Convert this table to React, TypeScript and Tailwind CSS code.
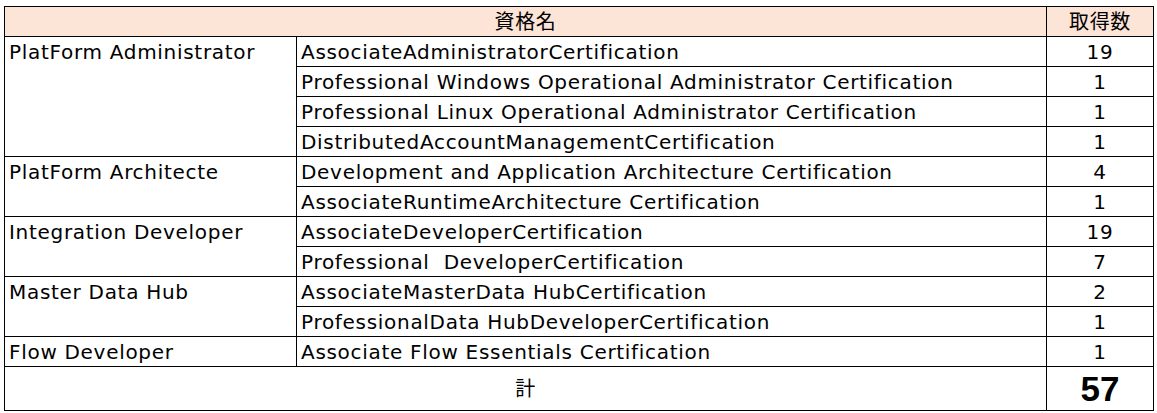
const groups: { name: string; items: [string, number][] }[] = [
  {
    name: "PlatForm Administrator",
    items: [
      ["AssociateAdministratorCertification", 19],
      ["Professional Windows Operational Administrator Certification", 1],
      ["Professional Linux Operational Administrator Certification", 1],
      ["DistributedAccountManagementCertification", 1],
    ],
  },
  {
    name: "PlatForm Architecte",
    items: [
      ["Development and Application Architecture Certification", 4],
      ["AssociateRuntimeArchitecture Certification", 1],
    ],
  },
  {
    name: "Integration Developer",
    items: [
      ["AssociateDeveloperCertification", 19],
      ["Professional\u00a0 DeveloperCertification", 7],
    ],
  },
  {
    name: "Master Data Hub",
    items: [
      ["AssociateMasterData HubCertification", 2],
      ["ProfessionalData HubDeveloperCertification", 1],
    ],
  },
  {
    name: "Flow Developer",
    items: [["Associate Flow Essentials Certification", 1]],
  },
];

const cell = "border border-[#000] leading-none";

export default function App() {
  return (
    <div className="bg-white w-[1157px] h-[413px] pt-[6px] pl-[4px] font-['DejaVu_Sans','Noto_Sans_CJK_JP',sans-serif] text-[20px] tracking-[0.7px] text-black">
      <table className="border-collapse table-fixed w-[1149px]">
        <colgroup>
          <col className="w-[292px]" />
          <col className="w-[750px]" />
          <col className="w-[107px]" />
        </colgroup>
        <tbody>
          <tr className="h-[30px] bg-[#fce4d6]">
            <td colSpan={2} className={`${cell} text-center`}>資格名</td>
            <td className={`${cell} text-center`}>取得数</td>
          </tr>
          {groups.map((g) =>
            g.items.map(([cert, n], i) => (
              <tr key={cert} className="h-[30px]">
                {i === 0 && (
                  <td rowSpan={g.items.length} className={`${cell} align-top px-[4px] pt-[5px]`}>
                    {g.name}
                  </td>
                )}
                <td className={`${cell} px-[4px] whitespace-pre`}>{cert}</td>
                <td className={`${cell} text-center`}>{n}</td>
              </tr>
            ))
          )}
          <tr className="h-[44px]">
            <td colSpan={2} className={`${cell} text-center`}>計</td>
            <td className={`${cell} text-center font-bold text-[35px] tracking-normal font-['Liberation_Sans',sans-serif]`}>57</td>
          </tr>
        </tbody>
      </table>
    </div>
  );
}
